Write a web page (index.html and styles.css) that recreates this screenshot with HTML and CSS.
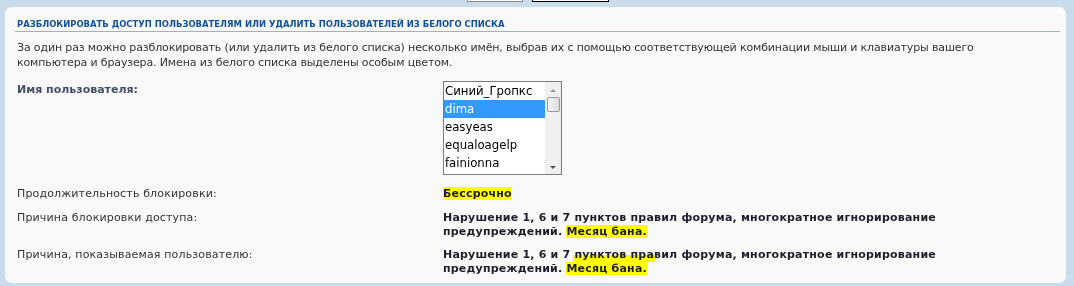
FILE: index.html
```html
<!DOCTYPE html>
<html lang="ru">
<head>
  <meta charset="UTF-8">
  <title>Разблокировать доступ</title>
  <link rel="stylesheet" href="styles.css">
</head>
<body>

  <div class="top-strip">
    <button class="btn btn-reset" aria-label="Сбросить"></button>
    <button class="btn btn-submit" aria-label="Отправить"></button>
  </div>

  <div class="panel">
    <h3 class="panel-title">Разблокировать доступ пользователям или удалить пользователей из белого списка</h3>
    <p class="intro">За один раз можно разблокировать (или удалить из белого списка) несколько имён, выбрав их с помощью соответствующей комбинации мыши и клавиатуры вашего компьютера и браузера. Имена из белого списка выделены особым цветом.</p>

    <dl class="row row-user">
      <dt class="label-strong">Имя пользователя:</dt>
      <dd>
        <div class="userlist">
          <ul class="userlist-items">
            <li>Синий_Гропкс</li>
            <li class="selected">dima</li>
            <li>easyeas</li>
            <li>equaloagelp</li>
            <li>fainionna</li>
          </ul>
          <div class="scrollbar">
            <span class="arrow arrow-up"></span>
            <span class="thumb"></span>
            <span class="arrow arrow-down"></span>
          </div>
        </div>
      </dd>
    </dl>

    <dl class="row">
      <dt>Продолжительность блокировки:</dt>
      <dd><strong><span class="mark">Бессрочно</span></strong></dd>
    </dl>

    <dl class="row">
      <dt>Причина блокировки доступа:</dt>
      <dd><strong>Нарушение 1, 6 и 7 пунктов правил форума, многократное игнорирование<br>предупреждений. <span class="mark">Месяц бана.</span></strong></dd>
    </dl>

    <dl class="row row-last">
      <dt>Причина, показываемая пользователю:</dt>
      <dd><strong>Нарушение 1, 6 и 7 пунктов правил форума, многократное игнорирование<br>предупреждений. <span class="mark mark-tall">Месяц бана.</span></strong></dd>
    </dl>
  </div>

</body>
</html>
```

FILE: styles.css
```css
body {
  margin: 0;
  background: #cadceb;
  font-family: "DejaVu Sans", Verdana, sans-serif;
  font-size: 11px;
  color: #333;
}

.top-strip {
  height: 7px;
  overflow: hidden;
  display: flex;
  padding-left: 467px;
  gap: 9px;
}

.btn {
  height: 20px;
  margin-top: -18px;
  background: #fbfbfb;
  padding: 0;
}

.btn-reset {
  width: 56px;
  border: 1px solid #8a8a8a;
}

.btn-submit {
  width: 77px;
  border: 1px solid #000;
}

.panel {
  margin: 0 8px 3px 5px;
  background: #f9f9f9;
  border-radius: 7px;
  padding: 10px 6px 7px 10px;
}

.panel-title {
  margin: 0;
  padding: 0 0 0 2px;
  border-bottom: 1px solid #a6b0bb;
  color: #115098;
  font-family: "DejaVu Sans Condensed", Tahoma, sans-serif;
  font-size: 9.4px;
  font-weight: bold;
  text-transform: uppercase;
  line-height: 14px;
}

.intro {
  margin: 8px 0 0 2px;
  max-width: 980px;
  line-height: 15px;
  letter-spacing: -0.14px;
}

.row {
  display: flex;
  margin: 0;
  padding: 10px 0 0;
}

.row dt {
  width: 426px;
  flex-shrink: 0;
  padding-left: 2px;
  line-height: 14px;
  letter-spacing: 0.15px;
}

.row dd {
  margin: 0;
  line-height: 14px;
}

.row-user {
  padding-top: 11px;
}

.row-user dt {
  padding-top: 2px;
  letter-spacing: 0;
}

.row-last {
  padding-top: 9px;
}

.label-strong {
  font-weight: bold;
  color: #425067;
}

.row strong {
  color: #1e1e2a;
  letter-spacing: 0.2px;
}

.mark {
  background: #ffff00;
  position: relative;
}

/* hand-drawn highlight spills onto the line above */
.mark-tall::before {
  content: "";
  position: absolute;
  left: 7px;
  top: -7px;
  width: 82px;
  height: 7px;
  background: #ffff00;
  mix-blend-mode: multiply;
}

.userlist {
  display: flex;
  width: 117px;
  height: 92px;
  border: 1px solid #7a7a7a;
  background: #fff;
  margin-bottom: 2px;
}

.userlist-items {
  list-style: none;
  margin: 0;
  padding: 0;
  flex: 1;
  font-family: "DejaVu Sans Condensed", Tahoma, sans-serif;
  font-size: 13px;
  color: #000;
}

.userlist-items li {
  height: 18px;
  line-height: 18px;
  padding-left: 1px;
}

.userlist-items .selected {
  background: #3399ff;
  color: #fff;
}

.scrollbar {
  width: 16px;
  background: #f0f0f0;
  display: flex;
  flex-direction: column;
  align-items: center;
}

.arrow {
  width: 0;
  height: 0;
  border-left: 3px solid transparent;
  border-right: 3px solid transparent;
  margin: 7px 0 5px;
}

.arrow-up {
  border-bottom: 3px solid #9a9a9a;
}

.arrow-down {
  border-top: 3px solid #555;
  margin-top: auto;
}

.thumb {
  width: 13px;
  height: 15px;
  border: 1px solid #9a9a9a;
  border-radius: 2px;
  background: linear-gradient(to right, #f4f4f4, #dcdcdc);
  box-sizing: border-box;
}
```
